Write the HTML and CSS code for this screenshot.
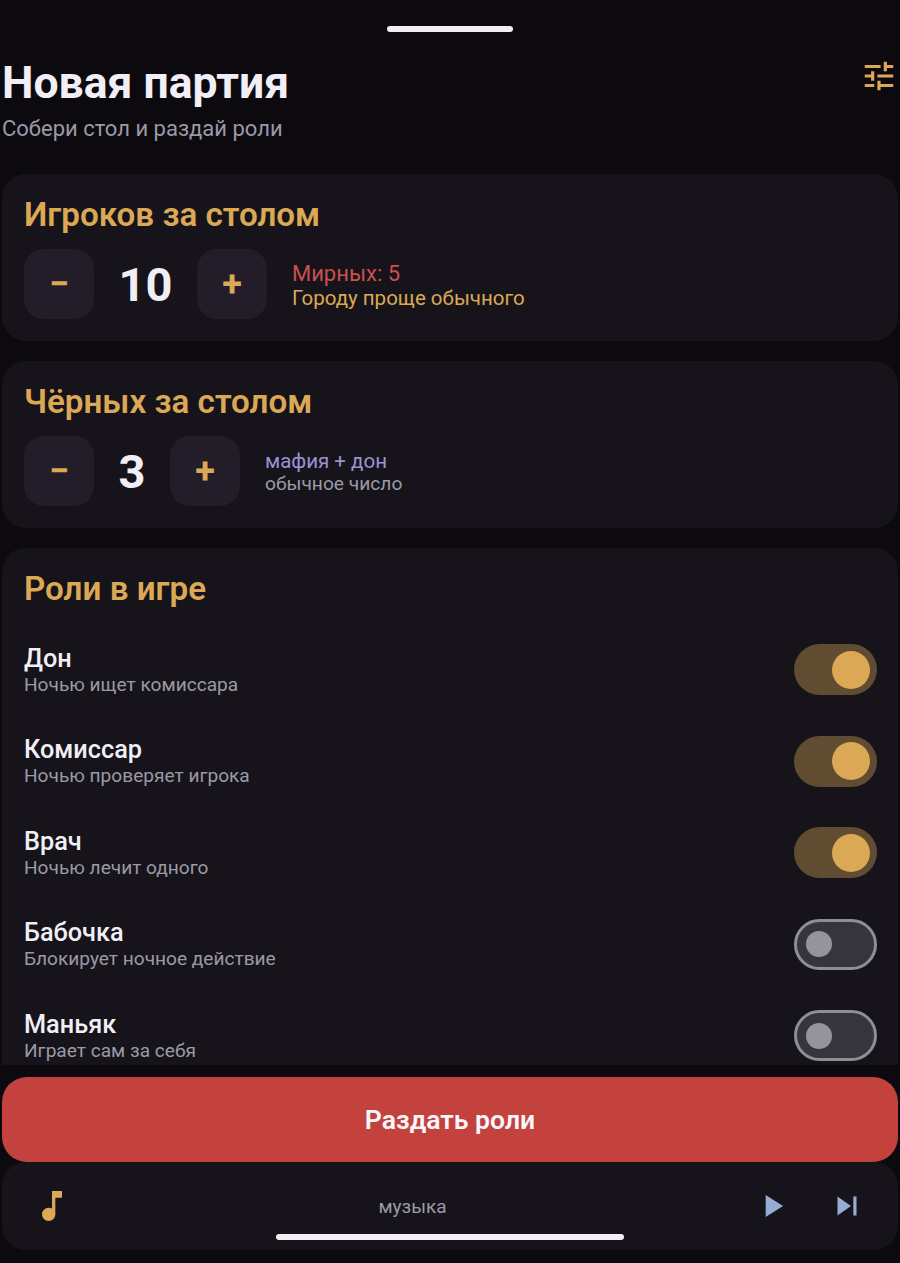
FILE: index.html
```html
<!DOCTYPE html>
<html lang="ru">
<head>
    <meta charset="UTF-8">
    <meta name="viewport" content="width=device-width, initial-scale=1.0">
    <title>Новая партия</title>
    <link rel="stylesheet" href="styles.css">
</head>
<body>
    <div class="screen">
        <div class="grabber"></div>
        <header class="top">
            <div>
                <h1 class="title">Новая партия</h1>
                <p class="subtitle">Собери стол и раздай роли</p>
            </div>
            <svg class="tune" viewBox="0 0 24 24" width="38" height="38">
                <path d="M3 17v2h6v-2H3zM3 5v2h10V5H3zm10 16v-2h8v-2h-8v-2h-2v6h2zM7 9v2H3v2h4v2h2V9H7zm14 4v-2H11v2h10zm-6-4h2V7h4V5h-4V3h-2v6z" fill="#dba856"/>
            </svg>
        </header>

        <div class="content">
            <section class="card">
                <h2 class="card-title">Игроков за столом</h2>
                <div class="stepper">
                    <button class="step">−</button>
                    <span class="count">10</span>
                    <button class="step">+</button>
                    <div class="info">
                        <div class="info-top red">Мирных: 5</div>
                        <div class="info-bottom gold">Городу проще обычного</div>
                    </div>
                </div>
            </section>

            <section class="card">
                <h2 class="card-title">Чёрных за столом</h2>
                <div class="stepper">
                    <button class="step">−</button>
                    <span class="count">3</span>
                    <button class="step">+</button>
                    <div class="info small">
                        <div class="info-top violet">мафия + дон</div>
                        <div class="info-bottom muted">обычное число</div>
                    </div>
                </div>
            </section>

            <section class="card roles">
                <h2 class="card-title">Роли в игре</h2>
                <div class="role">
                    <div class="role-text">
                        <div class="role-name">Дон</div>
                        <div class="role-desc">Ночью ищет комиссара</div>
                    </div>
                    <div class="toggle on"><span class="knob"></span></div>
                </div>
                <div class="role">
                    <div class="role-text">
                        <div class="role-name">Комиссар</div>
                        <div class="role-desc">Ночью проверяет игрока</div>
                    </div>
                    <div class="toggle on"><span class="knob"></span></div>
                </div>
                <div class="role">
                    <div class="role-text">
                        <div class="role-name">Врач</div>
                        <div class="role-desc">Ночью лечит одного</div>
                    </div>
                    <div class="toggle on"><span class="knob"></span></div>
                </div>
                <div class="role">
                    <div class="role-text">
                        <div class="role-name">Бабочка</div>
                        <div class="role-desc">Блокирует ночное действие</div>
                    </div>
                    <div class="toggle"><span class="knob"></span></div>
                </div>
                <div class="role">
                    <div class="role-text">
                        <div class="role-name">Маньяк</div>
                        <div class="role-desc">Играет сам за себя</div>
                    </div>
                    <div class="toggle"><span class="knob"></span></div>
                </div>
            </section>
        </div>

        <button class="deal">Раздать роли</button>

        <footer class="player">
            <svg class="note" viewBox="0 0 24 24" width="40" height="40">
                <path d="M12 3v10.55c-.59-.34-1.27-.55-2-.55-2.21 0-4 1.79-4 4s1.79 4 4 4 4-1.79 4-4V7h4V3h-6z" fill="#dba856"/>
            </svg>
            <span class="music">музыка</span>
            <svg class="play" viewBox="0 0 24 24" width="38" height="38">
                <path d="M8 5v14l11-7z" fill="#93aed2"/>
            </svg>
            <svg class="next" viewBox="0 0 24 24" width="38" height="38">
                <path d="M6 18l8.5-6L6 6v12zM16 6v12h2V6h-2z" fill="#93aed2"/>
            </svg>
        </footer>

        <div class="home-bar"></div>
    </div>
</body>
</html>
```

FILE: styles.css
```css
* {
    box-sizing: border-box;
}

body {
    margin: 0;
    background-color: #0c0a0f;
    color: #f1eff5;
    font-family: Roboto, "Noto Sans", sans-serif;
}

.screen {
    position: relative;
    display: flex;
    flex-direction: column;
    height: 1263px;
    padding: 0 2px 13px;
    overflow: hidden;
}

.grabber {
    flex: none;
    width: 126px;
    height: 6px;
    margin: 26px auto 0;
    border-radius: 3px;
    background-color: #f1eff5;
}

.top {
    flex: none;
    display: flex;
    justify-content: space-between;
    height: 142px;
    padding-top: 26px;
}

.title {
    margin: 0;
    font-size: 44.5px;
    line-height: 50px;
    font-weight: 700;
}

.subtitle {
    margin: 8px 0 0;
    font-size: 22px;
    line-height: 25px;
    color: #9c99a6;
}

.tune {
    margin-top: -1px;
}

.content {
    flex: 1;
    min-height: 0;
    overflow: hidden;
    display: flex;
    flex-direction: column;
    gap: 20px;
}

.card {
    flex: none;
    padding: 22px 21.5px 22px 22px;
    border-radius: 24px;
    background-color: #16141a;
}

.card-title {
    margin: 0;
    font-size: 33.2px;
    line-height: 38px;
    font-weight: 600;
    color: #dba856;
}

.stepper {
    display: flex;
    align-items: center;
    margin-top: 15px;
}

.step {
    width: 70px;
    height: 70px;
    padding: 0;
    border: none;
    border-radius: 20px;
    background-color: #221d29;
    color: #dba856;
    font-family: inherit;
    font-size: 36px;
    font-weight: 700;
}

.count {
    margin: 0 24.5px;
    font-size: 47px;
    font-weight: 700;
}

.info {
    margin-left: 25px;
    padding-top: 2px;
}

.info-top {
    font-size: 22px;
    line-height: 25px;
}

.info-bottom {
    font-size: 20.5px;
    line-height: 24px;
}

.info.small .info-top {
    font-size: 20.5px;
    line-height: 23px;
}

.info.small .info-bottom {
    font-size: 19.2px;
    line-height: 22px;
}

.red {
    color: #c9504f;
}

.gold {
    color: #dba856;
}

.violet {
    color: #9c92d2;
}

.muted {
    color: #9c99a6;
}

.roles {
    padding-bottom: 40px;
}

.role {
    display: flex;
    align-items: center;
    justify-content: space-between;
    height: 51px;
    margin-top: 40.5px;
}

.card-title + .role {
    margin-top: 36px;
}

.role-text {
    padding-top: 2px;
}

.role-name {
    font-size: 25.3px;
    line-height: 28px;
    font-weight: 500;
}

.role-desc {
    font-size: 19.1px;
    line-height: 24px;
    color: #9c99a6;
}

.toggle {
    display: flex;
    align-items: center;
    width: 83px;
    height: 51px;
    padding: 0 9px;
    border: 3px solid #8f8d96;
    border-radius: 26px;
    background-color: #36353c;
}

.toggle .knob {
    width: 26px;
    height: 26px;
    border-radius: 50%;
    background-color: #96939e;
}

.toggle.on {
    justify-content: flex-end;
    padding: 0 7px;
    border: none;
    background-color: #5f4c31;
}

.toggle.on .knob {
    width: 38px;
    height: 38px;
    background-color: #dba856;
}

.deal {
    flex: none;
    width: 100%;
    height: 85px;
    margin-top: 12px;
    border: none;
    border-radius: 25px;
    background-color: #c3423e;
    color: #f8f6fa;
    font-family: inherit;
    font-size: 26.6px;
    font-weight: 600;
}

.player {
    flex: none;
    display: flex;
    align-items: center;
    height: 88px;
    padding: 0 32px 0 30px;
    border-radius: 24px;
    background-color: #16141a;
}

.music {
    flex: 1;
    text-align: center;
    font-size: 19px;
    color: #9c99a6;
}

.play {
    margin-right: 37px;
}

.home-bar {
    position: absolute;
    left: 276px;
    bottom: 23px;
    width: 348px;
    height: 6px;
    border-radius: 3px;
    background-color: #f1eff5;
}
```
